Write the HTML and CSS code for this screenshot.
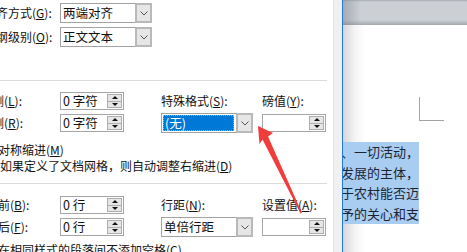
FILE: index.html
```html
<!DOCTYPE html>
<html lang="zh-CN">
<head>
  <meta charset="UTF-8">
  <title>段落</title>
  <link rel="stylesheet" href="styles.css">
</head>
<body>

<!-- 段落对话框（左侧被裁掉） -->
<div class="dialog">
  <div class="grid general">
    <span class="label">对齐方式(<u>G</u>):</span>
    <div class="select wide"><span class="val">两端对齐</span><span class="btn"><svg width="8" height="5"><polyline points="0.5,0.5 4,4 7.5,0.5" /></svg></span></div>
    <span class="label">大纲级别(<u>O</u>):</span>
    <div class="select wide"><span class="val">正文文本</span><span class="btn"><svg width="8" height="5"><polyline points="0.5,0.5 4,4 7.5,0.5" /></svg></span></div>
  </div>

  <div class="sep"></div>

  <div class="grid indent">
    <span class="label">左侧(<u>L</u>):</span>
    <div class="spin"><span class="num">0 字符</span><span class="arrows"><i class="up"></i><i class="down"></i></span></div>
    <span class="label c3">特殊格式(<u>S</u>):</span>
    <span class="label c4">磅值(<u>Y</u>):</span>

    <span class="label">右侧(<u>R</u>):</span>
    <div class="spin"><span class="num">0 字符</span><span class="arrows"><i class="up"></i><i class="down"></i></span></div>
    <div class="select focus c3"><span class="val">(无)</span><span class="btn"><svg width="8" height="5"><polyline points="0.5,0.5 4,4 7.5,0.5" /></svg></span></div>
    <div class="spin c4"><span class="num"></span><span class="arrows"><i class="up"></i><i class="down"></i></span></div>
  </div>

  <p class="check first">对称缩进(<u>M</u>)</p>
  <p class="check second">如果定义了文档网格，则自动调整右缩进(<u>D</u>)</p>

  <div class="sep sep2"></div>

  <div class="grid spacing">
    <span class="label">段前(<u>B</u>):</span>
    <div class="spin"><span class="num">0 行</span><span class="arrows"><i class="up"></i><i class="down"></i></span></div>
    <span class="label c3">行距(<u>N</u>):</span>
    <span class="label c4">设置值(<u>A</u>):</span>

    <span class="label">段后(<u>F</u>):</span>
    <div class="spin"><span class="num">0 行</span><span class="arrows"><i class="up"></i><i class="down"></i></span></div>
    <div class="select c3"><span class="val">单倍行距</span><span class="btn"><svg width="8" height="5"><polyline points="0.5,0.5 4,4 7.5,0.5" /></svg></span></div>
    <div class="spin c4"><span class="num"></span><span class="arrows"><i class="up"></i><i class="down"></i></span></div>
  </div>

  <p class="check last">在相同样式的段落间不添加空格(<u>C</u>)</p>
</div>

<div class="stripe"></div>

<!-- 后面的文档窗口 -->
<div class="doc">
  <div class="band"></div>
  <div class="page">
    <div class="corner"></div>
    <div class="text">
      <p>、一切活动，</p>
      <p>是发展的主体，</p>
      <p>对于农村能否迈</p>
      <p>给予的关心和支</p>
    </div>
    <div class="mark">
      <span class="logo">Bai<svg width="16" height="17" viewBox="0 0 16 17"><circle cx="3" cy="6" r="2.2" /><circle cx="6.5" cy="2.5" r="2.2" /><circle cx="10.5" cy="2.5" r="2.2" /><circle cx="13.5" cy="6" r="2.2" /><path d="M8 8 C4 8 2 13 3.5 15 C5 16.5 11 16.5 12.5 15 C14 13 12 8 8 8 Z" /></svg>du</span><span class="jy">经验</span>
      <span class="url">jingyan.baidu.com</span>
    </div>
  </div>
</div>

<!-- 红色箭头 -->
<svg class="arrow" width="467" height="252">
  <polygon points="258,126 273,133 268,136.5 302,213 300.5,213.6 262.5,139.5 259.5,144" />
</svg>

</body>
</html>
```

FILE: styles.css
```css
body {
  margin: 0;
  width: 467px;
  height: 252px;
  overflow: hidden;
  display: flex;
  font-family: "Noto Sans CJK SC", sans-serif;
  font-size: 12px;
  color: #111;
  background: #fff;
}
u {
  text-decoration: underline;
  text-underline-offset: 1px;
}
p {
  margin: 0;
}

/* 对话框 */
.dialog {
  width: 333px;
  height: 252px;
  overflow: hidden;
  flex: none;
  padding-top: 3px;
  box-sizing: border-box;
  background: #fff;
}
.grid {
  display: grid;
  grid-template-columns: 80px 64px 37px 92px 9px 64px;
  grid-auto-rows: 20px;
  align-items: center;
  margin-left: -20px;
}
.grid > .label,
.grid > .spin {
  grid-column: auto;
}
.grid > .label:not(.c3):not(.c4) {
  grid-column: 1;
}
.general {
  row-gap: 4px;
}
.general .label {
  padding-left: 4px;
}
.indent {
  row-gap: 2px;
  margin-top: 10px;
}
.spacing {
  row-gap: 2px;
  margin-top: 11px;
}
.spacing .label:not(.c3):not(.c4) {
  padding-left: 6px;
}
.label {
  white-space: nowrap;
  line-height: 16px;
}
.grid > .c3 {
  grid-column: 4;
}
.grid > .c4 {
  grid-column: 6;
}
.sep {
  height: 1px;
  background: #dcdcdc;
  margin: 33px 6px 0 0;
}
.sep2 {
  margin-top: 9px;
}
.check {
  line-height: 16px;
  white-space: nowrap;
}
.check.first {
  margin-top: 9px;
  margin-left: -2px;
}
.check.last {
  margin-top: 5px;
  margin-left: -2px;
}

/* 下拉框 */
.select {
  box-sizing: border-box;
  height: 20px;
  width: 92px;
  border: 1px solid #a2a2a2;
  display: flex;
  background: #fff;
}
.grid > .select.wide {
  grid-column: 2 / 5;
}
.select .val {
  flex: 1;
  font-size: 12.5px;
  line-height: 18px;
  padding-left: 2px;
  white-space: nowrap;
}
.select .btn {
  width: 13px;
  margin: -1px -1px -1px 0;
  border: 2px solid #b9b9b9;
  background: #e6e6e6;
  display: flex;
  align-items: center;
  justify-content: center;
}
.select svg polyline {
  fill: none;
  stroke: #555;
  stroke-width: 1;
}
.select.focus .val {
  margin: 1px 2px 1px 1px;
  border: 1px dotted #f0a030;
  background: #0078d7;
  color: #fff;
  line-height: 14px;
  padding-left: 1px;
}

/* 数值框 */
.spin {
  box-sizing: border-box;
  height: 18px;
  border: 1px solid #a5a5a5;
  display: flex;
  align-items: center;
  background: #fff;
}
.spin .num {
  flex: 1;
  font-size: 12.5px;
  line-height: 16px;
  padding-left: 2px;
  white-space: nowrap;
}
.arrows {
  width: 15px;
  height: 14px;
  margin-right: 1px;
  display: flex;
  flex-direction: column;
  box-sizing: border-box;
  border: 1px solid #adadad;
  background: #e6e6e6;
}
.arrows i {
  flex: 1;
  display: flex;
  align-items: center;
  justify-content: center;
}
.arrows i.up {
  border-bottom: 1px solid #adadad;
}
.arrows i::before {
  content: "";
  border-left: 3px solid transparent;
  border-right: 3px solid transparent;
}
.arrows i.up::before {
  border-bottom: 3px solid #111;
}
.arrows i.down::before {
  border-top: 3px solid #111;
}

/* 中间灰条 */
.stripe {
  width: 8px;
  flex: none;
  background: #f0f0f0;
  border-left: 1px solid #e2e2e2;
}

/* 文档窗口 */
.doc {
  flex: 1;
  position: relative;
  border-left: 1px solid #2378d4;
  background: linear-gradient(to right, #d6d6d6, #f4f4f4 12px, #fff 22px);
}
.band {
  height: 25px;
  background:
    linear-gradient(to right, rgba(120, 126, 134, 0.45), rgba(120, 126, 134, 0) 18px),
    linear-gradient(to bottom, #a9adb3, #ccd0d5 2px, #ccd0d5 20px, #a3a8ae 25px);
}
.page {
  position: relative;
}
.corner {
  width: 24px;
  height: 23px;
  margin: 72px 0 0 76px;
  border-left: 1px solid #a3a3a3;
  border-bottom: 1px solid #a3a3a3;
}
.text {
  width: 76px;
  margin-top: 21px;
  overflow: hidden;
  background: #a8cdf1;
  color: #1c2434;
  font-size: 13px;
  line-height: 20.5px;
}
.text p {
  display: flex;
  justify-content: flex-end;
  white-space: nowrap;
}

/* 水印 */
.mark {
  position: absolute;
  left: 5px;
  top: 176px;
  color: rgba(255, 255, 255, 0.8);
  text-shadow: 0 0 1px rgba(70, 70, 70, 0.5);
  font-family: "Liberation Sans", sans-serif;
  white-space: nowrap;
}
.logo {
  font-size: 17px;
  font-weight: bold;
  letter-spacing: -0.5px;
}
.logo svg {
  fill: rgba(255, 255, 255, 0.75);
  stroke: rgba(70, 70, 70, 0.4);
  stroke-width: 0.6;
  margin: 0 1px;
  vertical-align: -2px;
}
.jy {
  font-family: "Noto Sans CJK SC", sans-serif;
  font-size: 14px;
  margin-left: 2px;
}
.url {
  display: block;
  font-size: 11px;
  margin-top: -2px;
  padding-left: 2px;
}

/* 红色箭头 */
.arrow {
  position: absolute;
  left: 0;
  top: 0;
  pointer-events: none;
}
.arrow polygon {
  fill: #f23b3b;
}
```
